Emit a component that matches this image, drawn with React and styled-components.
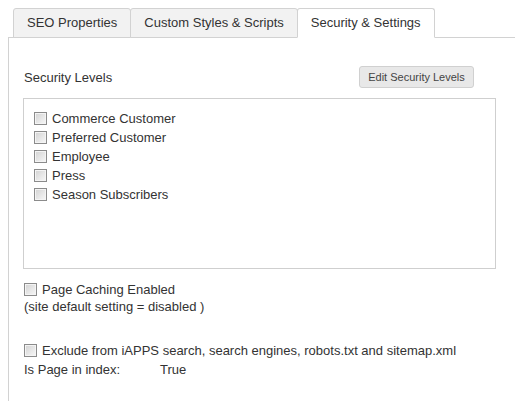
import React from "react";
import styled, { createGlobalStyle } from "styled-components";

const Global = createGlobalStyle`
  html, body { margin: 0; padding: 0; background: #fff; }
  body { font-family: "Liberation Sans", Arial, sans-serif; font-size: 13px; color: #333; }
`;

const Page = styled.div`
  padding: 8px 0 0 8px;
`;

const TabBar = styled.div`
  display: flex;
  padding-left: 5px;
  position: relative;
  z-index: 1;
  margin-bottom: -1px;
`;

const Tab = styled.div`
  height: 28px;
  line-height: 28px;
  padding: 0 13px;
  border: 1px solid #d2d2d2;
  border-bottom-color: ${(p) => (p.$active ? "#fff" : "#d2d2d2")};
  margin-left: -1px;
  &:first-child { margin-left: 0; }
  border-radius: 3px 3px 0 0;
  background: ${(p) => (p.$active ? "#fff" : "#f2f2f2")};
  color: #333;
  white-space: nowrap;
`;

const Panel = styled.div`
  border-top: 1px solid #d2d2d2;
  border-left: 1px solid #d2d2d2;
  padding: 28px 0 24px 15px;
  min-height: 330px;
`;

const HeaderRow = styled.div`
  display: flex;
  align-items: center;
  justify-content: space-between;
  width: 450px;
  margin-bottom: 10px;
`;

const Label = styled.span`
  color: #333;
`;

const SmallButton = styled.button`
  font-family: "Liberation Sans", Arial, sans-serif;
  font-size: 11px;
  color: #444;
  height: 22px;
  width: 115px;
  padding: 0;
  border: 1px solid #d0d0d0;
  border-radius: 3px;
  background: #e8e8e8;
`;

const ListBox = styled.div`
  width: 461px;
  height: 149px;
  border: 1px solid #cfcfcf;
  padding: 10px 0 10px 10px;
  margin-left: -1px;
  margin-bottom: 12px;
`;

const CheckRow = styled.label`
  display: flex;
  align-items: center;
  gap: ${(p) => p.$gap || 5}px;
  height: ${(p) => p.$h || 19}px;
  color: #333;
`;

const Box = styled.input.attrs({ type: "checkbox" })`
  appearance: none;
  -webkit-appearance: none;
  margin: 0;
  width: 13px;
  height: 13px;
  flex: none;
  border: 1px solid #8b8b8b;
  background: linear-gradient(135deg, #d2d2d2 0%, #e9e9e9 60%, #f7f7f7 100%);
  box-shadow: inset 0 0 0 1px #f4f4f4;
`;

const Note = styled.div`
  line-height: 17px;
  height: 17px;
  margin-bottom: 26px;
`;

const InfoRow = styled.div`
  display: flex;
  line-height: 19px;
`;

const InfoKey = styled.span`
  width: 136px;
`;

const levels = [
  "Commerce Customer",
  "Preferred Customer",
  "Employee",
  "Press",
  "Season Subscribers",
];

export default function App() {
  return (
    <Page>
      <Global />
      <TabBar>
        <Tab>SEO Properties</Tab>
        <Tab>Custom Styles &amp; Scripts</Tab>
        <Tab $active>Security &amp; Settings</Tab>
      </TabBar>
      <Panel>
        <HeaderRow>
          <Label>Security Levels</Label>
          <SmallButton>Edit Security Levels</SmallButton>
        </HeaderRow>
        <ListBox>
          {levels.map((l) => (
            <CheckRow key={l}>
              <Box />
              {l}
            </CheckRow>
          ))}
        </ListBox>
        <CheckRow $h={17}>
          <Box />
          Page Caching Enabled
        </CheckRow>
        <Note>(site default setting = disabled )</Note>
        <CheckRow>
          <Box />
          Exclude from iAPPS search, search engines, robots.txt and sitemap.xml
        </CheckRow>
        <InfoRow>
          <InfoKey>Is Page in index:</InfoKey>
          <span>True</span>
        </InfoRow>
      </Panel>
    </Page>
  );
}
